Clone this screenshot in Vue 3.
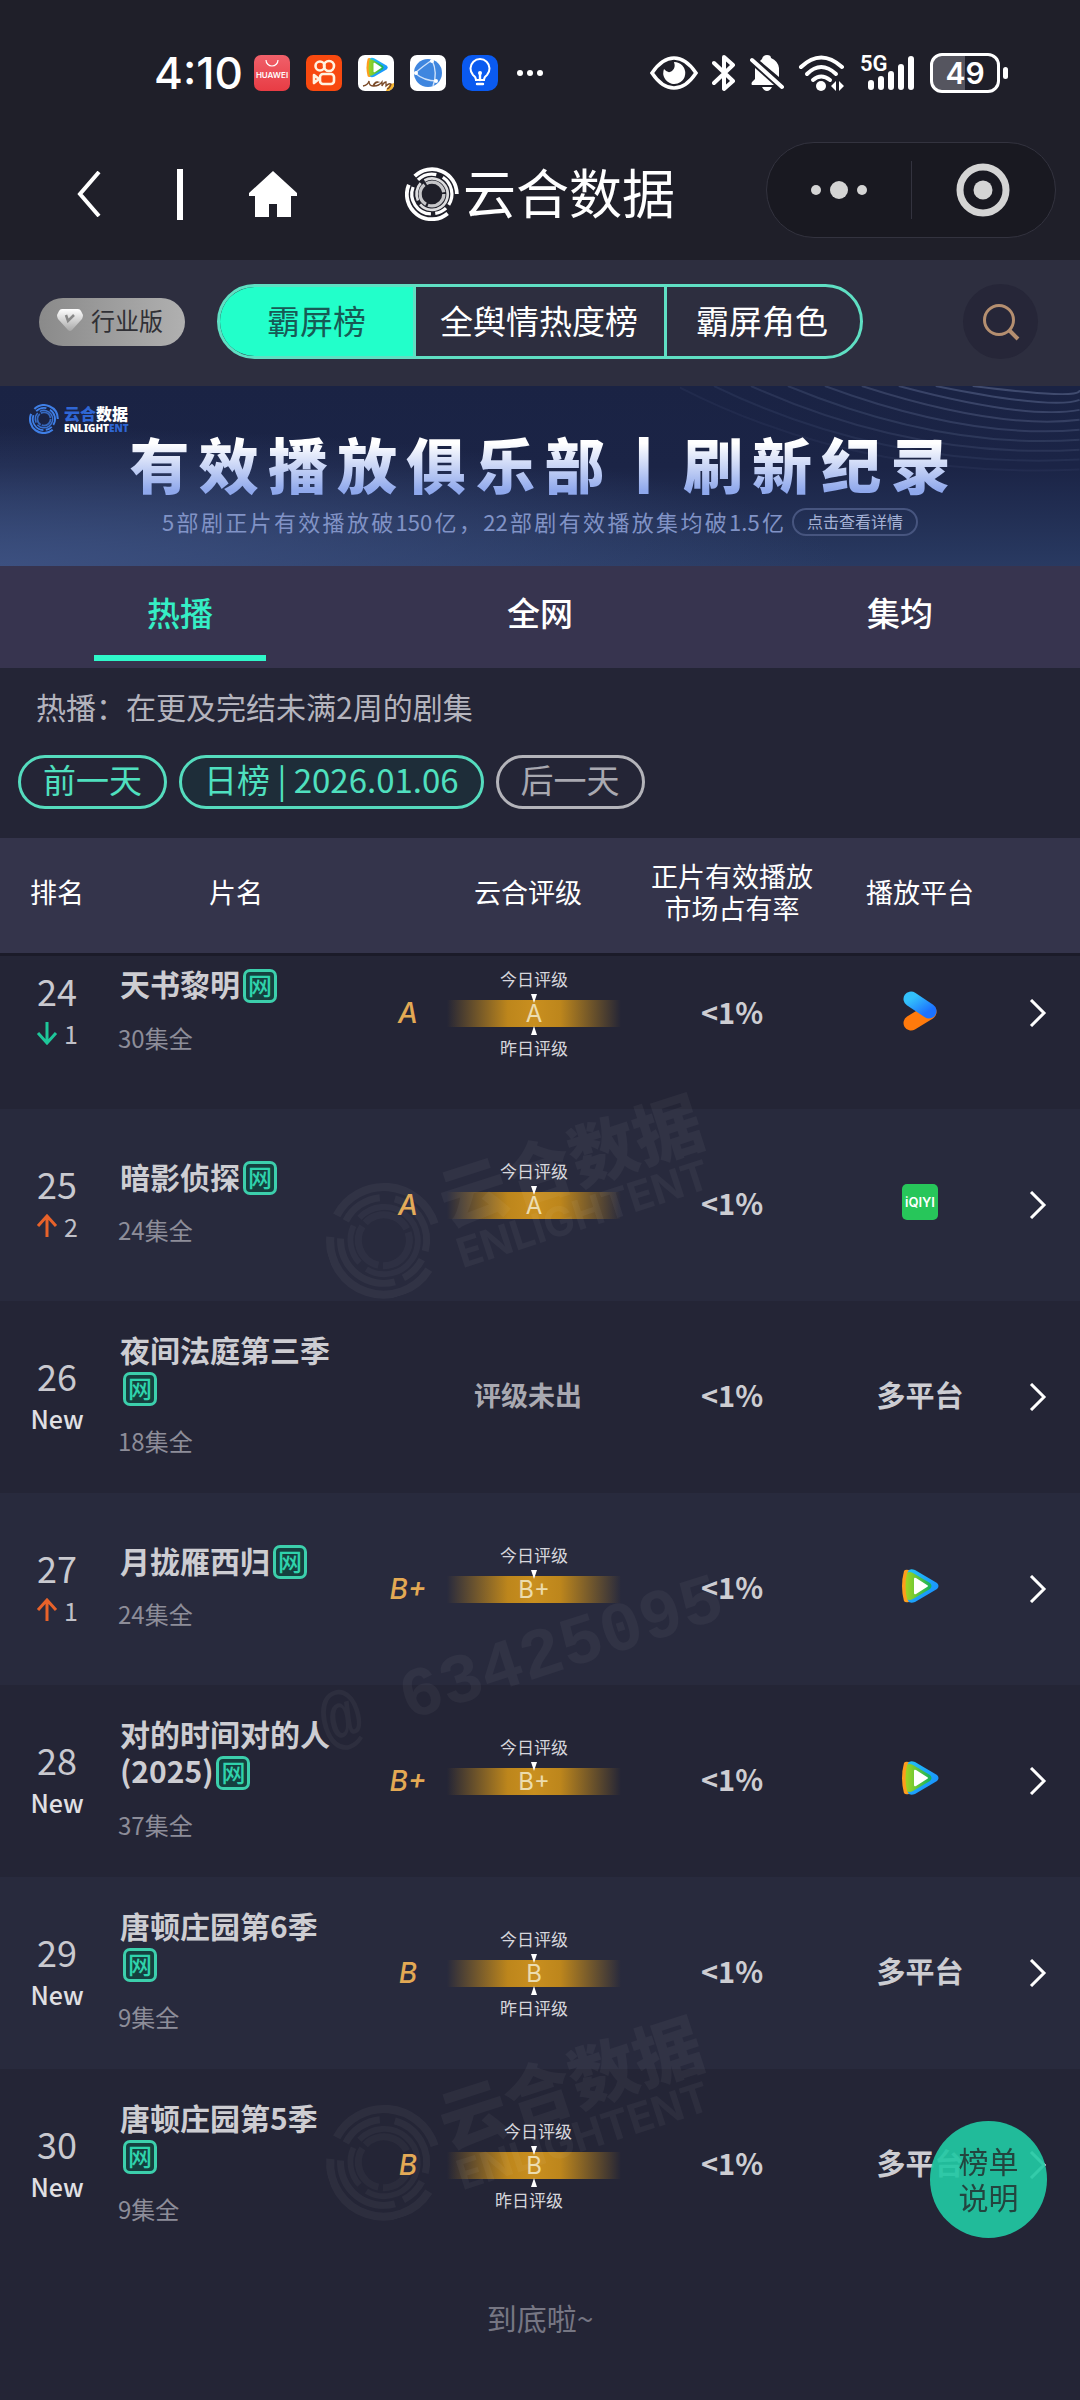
<template>
  <div class="page">
    <!-- 公用图形 -->
    <svg class="defs" aria-hidden="true">
      <symbol id="ring" viewBox="0 0 100 100">
        <g fill="none" stroke="currentColor">
          <path d="M18 17A46 46 0 0 1 96 50" stroke-width="7" />
          <path d="M7 33A46 46 0 0 0 79 86" stroke-width="7" />
          <path d="M24 24A37 37 0 0 1 58 14" stroke-width="6" />
          <path d="M70 19A37 37 0 0 1 81 70" stroke-width="6" />
          <path d="M15 37A37 37 0 0 0 48 87" stroke-width="6" />
          <path d="M56 86A37 37 0 0 0 76 76" stroke-width="6" />
          <path d="M36 25A29 29 0 1 1 28 69" stroke-width="5" opacity="0.85" />
          <path d="M29 30A29 29 0 0 0 24 62" stroke-width="5" opacity="0.85" />
          <circle cx="50" cy="50" r="22" stroke-width="6" stroke-dasharray="42 4" opacity="0.75" />
        </g>
      </symbol>
      <linearGradient id="ykBlue" x1="0" y1="0" x2="1" y2="1">
        <stop offset="0" stop-color="#33c1fb" />
        <stop offset="1" stop-color="#1c72ff" />
      </linearGradient>
      <linearGradient id="gem" x1="0" y1="0" x2="0" y2="1">
        <stop offset="0" stop-color="#ffffff" />
        <stop offset="1" stop-color="#a8a8a8" />
      </linearGradient>
      <linearGradient id="txBlue" x1="0" y1="0" x2="1" y2="1">
        <stop offset="0" stop-color="#23c3f5" />
        <stop offset="1" stop-color="#1787ff" />
      </linearGradient>
      <linearGradient id="txGreen" x1="0" y1="0" x2="1" y2="0">
        <stop offset="0" stop-color="#a4d51f" />
        <stop offset="1" stop-color="#12b25e" />
      </linearGradient>
      <symbol id="tencent" viewBox="0 0 40 36">
        <path d="M4 3Q0 18 4 33Q5 35 9 34L15 30V6L9 2Q5 1 4 3Z" fill="#ff9d1c" />
        <path d="M8 3Q5 18 8 33Q10 36 15 34L37 21Q40 18 37 15L15 2Q10 0 8 3Z" fill="url(#txBlue)" />
        <path d="M7 5Q4 18 7 31Q9 33 13 31L30 21Q33 18 30 15L13 5Q9 3 7 5Z" fill="url(#txGreen)" />
        <path d="M14 11V25Q14 27 16 26L27 19Q29 18 27 17L16 10Q14 9 14 11Z" fill="#fff" />
      </symbol>
    </svg>

    <!-- 状态栏 -->
    <div class="status">
      <span class="clock">4:10</span>
      <div class="apps">
        <span class="app huawei">
          <svg viewBox="0 0 36 14"><path d="M12 5a6 6 0 0 0 12 0" fill="none" stroke="#fff" stroke-width="1.2" /></svg>
          HUAWEI
        </span>
        <svg class="app" viewBox="0 0 36 36">
          <rect width="36" height="36" rx="7" fill="#f8490f" />
          <g fill="none" stroke="#fff3e0" stroke-width="2.6">
            <circle cx="14" cy="11" r="4.5" />
            <circle cx="23" cy="11" r="5" />
            <rect x="14" y="19" width="14" height="10" rx="3" />
            <path d="M8 20l5 4-5 4z" stroke-linejoin="round" />
          </g>
        </svg>
        <svg class="app" viewBox="0 0 36 36">
          <rect width="36" height="36" rx="7" fill="#fff" />
          <path d="M28 36Q30 29 36 28V30Q35 35 30 36Z" fill="#f7b52c" />
          <svg x="7" y="2" width="24" height="21"><use href="#tencent" /></svg>
          <path d="M5 31q5-1 6-5q0 5 4 5q2-5 5-4q-4 1-4 4q5 0 8-4v4q2-4 4-4v4q3-3 5-2q-1 4-4 5" fill="none" stroke="#7a4a28" stroke-width="1.3" />
        </svg>
        <svg class="app" viewBox="0 0 36 36">
          <rect width="36" height="36" rx="7" fill="#fff" />
          <circle cx="18" cy="18" r="14" fill="#3f86df" />
          <path d="M22 5Q28 18 23 31M22 5Q12 12 5 18Q14 26 27 26" fill="none" stroke="#cfe2fa" stroke-width="1.4" />
          <circle cx="22" cy="6" r="2" fill="#fff" />
          <circle cx="6" cy="18" r="2" fill="#fff" />
          <circle cx="26" cy="26" r="2" fill="#fff" />
        </svg>
        <svg class="app" viewBox="0 0 36 36">
          <rect width="36" height="36" rx="10" fill="#0a5af0" />
          <path d="M14 25Q14 22 11 20A9.5 9.5 0 1 1 25 20Q22 22 22 25Z" fill="none" stroke="#fff" stroke-width="2" />
          <path d="M18 19v6M15 29h6" stroke="#fff" stroke-width="2.4" stroke-linecap="round" />
          <circle cx="18" cy="18" r="2" fill="#fff" />
        </svg>
      </div>
      <svg class="dots" viewBox="0 0 28 8">
        <g fill="#fff"><circle cx="4" cy="4" r="3" /><circle cx="14" cy="4" r="3" /><circle cx="24" cy="4" r="3" /></g>
      </svg>
      <div class="signals">
        <svg width="48" height="34" viewBox="0 0 48 34">
          <path d="M2 17Q12 2 24 2T46 17Q36 32 24 32T2 17Z" fill="none" stroke="#fff" stroke-width="3.5" />
          <path d="M24 6a11 11 0 1 1-10 7q4 5 8 2t2-9z" fill="#fff" />
        </svg>
        <svg width="24" height="38" viewBox="0 0 24 38">
          <path d="M2 9L21 27L12 35V3L21 11L2 29" fill="none" stroke="#fff" stroke-width="4" stroke-linejoin="round" stroke-linecap="round" />
        </svg>
        <svg width="34" height="38" viewBox="0 0 34 38">
          <path d="M12 5Q13 1 17 1T21 4Q28 7 29 14V23L10 7ZM5 14L24 31H2Q1 30 2 28L5 25ZM12 33H22Q20 37 17 37T12 33Z" fill="#fff" />
          <path d="M2 6L32 33" stroke="#fff" stroke-width="4" stroke-linecap="round" />
        </svg>
        <svg width="48" height="38" viewBox="0 0 48 38">
          <g fill="none" stroke="#fff" stroke-width="4" stroke-linecap="round">
            <path d="M3 13Q23-6 44 13" />
            <path d="M9 20Q23 6 38 20" />
            <path d="M15 26Q23 19 32 26" />
          </g>
          <circle cx="23" cy="32" r="5" fill="#fff" />
          <path d="M33 32l5-5v10zM46 32l-5-5v10z" fill="#fff" />
        </svg>
        <span class="cell">
          <svg width="56" height="38" viewBox="0 0 56 38">
            <g stroke="#fff" stroke-width="6" stroke-linecap="round">
              <path d="M11 29v4M21 25v8M31 20v13M41 13v20M51 5v28" />
            </g>
          </svg>
          <span class="net">5G</span>
        </span>
        <span class="battery">49</span>
      </div>
    </div>

    <!-- 导航栏 -->
    <header class="nav">
      <div class="nav-left">
        <button class="icon-btn" aria-label="返回">
          <svg width="24" height="46" viewBox="0 0 24 46"><path d="M22 1L3 23L22 45" fill="none" stroke="#fff" stroke-width="4" /></svg>
        </button>
        <i class="nav-line"></i>
        <button class="icon-btn" aria-label="首页">
          <svg width="48" height="46" viewBox="0 0 48 46"><path d="M24 0L48 22V25H42V46H28V33H20V46H6V25H0V22Z" fill="#fff" /></svg>
        </button>
      </div>
      <h1 class="nav-title">
        <svg class="nav-logo"><use href="#ring" /></svg>云合数据
      </h1>
      <div class="capsule">
        <button class="icon-btn" aria-label="更多">
          <svg width="56" height="54" viewBox="0 0 56 54"><g fill="#d4d4d4"><circle cx="5" cy="27" r="5" /><circle cx="28" cy="27" r="9" /><circle cx="51" cy="27" r="5" /></g></svg>
        </button>
        <button class="icon-btn" aria-label="关闭">
          <svg width="54" height="54" viewBox="0 0 54 54"><circle cx="27" cy="27" r="23" fill="none" stroke="#d4d4d4" stroke-width="7" /><circle cx="27" cy="27" r="9.5" fill="#d4d4d4" /></svg>
        </button>
      </div>
    </header>

    <!-- 榜单切换 -->
    <div class="toolbar">
      <button class="edition">
        <svg width="26" height="22" viewBox="0 0 26 22">
          <path d="M5 0H21Q23 0 24 2L26 6Q26 8 25 10L15 21Q13 23 11 21L1 10Q0 8 0 6L2 2Q3 0 5 0Z" fill="url(#gem)" />
          <path d="M9 6l2 6 6-6" fill="none" stroke="#888" stroke-width="2.5" />
        </svg>
        行业版
      </button>
      <div class="segment">
        <button
          v-for="item in boards"
          :key="item"
          class="segment-btn"
          :class="{ active: item === activeBoard }"
          @click="activeBoard = item"
        >{{ item }}</button>
      </div>
      <button class="search" aria-label="搜索">
        <svg width="38" height="38" viewBox="0 0 38 38"><g fill="none" stroke="#b58f70" stroke-width="3"><circle cx="17" cy="17" r="14.5" /><path d="M27 27L36 36" stroke-width="4" /></g></svg>
      </button>
    </div>

    <!-- 广告横幅 -->
    <section class="banner">
      <svg class="banner-waves" viewBox="0 0 400 181" preserveAspectRatio="none">
        <g fill="none" stroke="#8fa0c8" stroke-width="2">
          <path v-for="n in 9" :key="n" :d="wave(n)" :opacity="0.36 - n * 0.033" />
        </g>
      </svg>
      <div class="brand">
        <svg class="brand-logo"><use href="#ring" /></svg>
        <div class="brand-text">
          <span class="brand-cn"><em>云合</em>数据</span>
          <span class="brand-en">ENLIGHT<em>ENT</em></span>
        </div>
      </div>
      <h2 class="banner-title">有效播放俱乐部丨刷新纪录</h2>
      <div class="banner-sub">
        <p>5部剧正片有效播放破150亿，22部剧有效播放集均破1.5亿</p>
        <a href="#detail">点击查看详情</a>
      </div>
    </section>

    <nav class="tabs">
      <button
        v-for="tab in tabs"
        :key="tab"
        class="tab"
        :class="{ active: tab === activeTab }"
        @click="activeTab = tab"
      >{{ tab }}</button>
    </nav>

    <!-- 日期筛选 -->
    <section class="filter">
      <p>热播：在更及完结未满2周的剧集</p>
      <div class="days">
        <button class="day">前一天</button>
        <button class="day current">日榜 | 2026.01.06</button>
        <button class="day off">后一天</button>
      </div>
    </section>

    <!-- 榜单 -->
    <main class="list">
      <table>
        <colgroup>
          <col class="c-rank" /><col class="c-name" /><col class="c-rate" />
          <col class="c-share" /><col class="c-plat" /><col />
        </colgroup>
        <thead>
          <tr>
            <th>排名</th>
            <th class="name">片名</th>
            <th class="rate">云合评级</th>
            <th>正片有效播放<br />市场占有率</th>
            <th>播放平台</th>
            <th></th>
          </tr>
        </thead>
        <tbody>
          <tr v-for="row in rows" :key="row.rank">
            <td class="order">
              <div class="rank">{{ row.rank }}</div>
              <div v-if="row.move" class="move">
                <svg width="22" height="24" viewBox="0 0 22 24" :class="row.move > 0 ? 'up' : 'down'">
                  <path d="M11 23V3M2 12L11 2L20 12" fill="none" stroke="currentColor" stroke-width="3" />
                </svg>
                {{ Math.abs(row.move) }}
              </div>
              <div v-else class="move fresh">New</div>
            </td>
            <td class="name">
              <div class="title">{{ row.title }}<span class="tag">网</span></div>
              <div class="eps">{{ row.eps }}集全</div>
            </td>
            <td class="rate">
              <div v-if="row.grade" class="rating">
                <em class="grade">{{ row.grade }}</em>
                <div class="scale" :class="{ shifted: row.shifted }">
                  <span class="today">今日评级</span>
                  <div class="bar" :class="{ both: row.yesterday }">{{ row.grade }}</div>
                  <span class="yesterday">{{ row.yesterday ? '昨日评级' : '' }}</span>
                </div>
              </div>
              <div v-else class="pending">评级未出</div>
            </td>
            <td class="strong">&lt;1%</td>
            <td class="strong">
              <svg v-if="row.platform === 'youku'" class="plat" width="34" height="40" viewBox="0 0 34 40">
                <path d="M8 32L26 21" stroke="#ff7a0c" stroke-width="15" stroke-linecap="round" />
                <path d="M8 8L26 20" stroke="url(#ykBlue)" stroke-width="15" stroke-linecap="round" />
              </svg>
              <span v-else-if="row.platform === 'iqiyi'" class="plat iqiyi">iQIYI</span>
              <svg v-else-if="row.platform === 'tencent'" class="plat" width="40" height="36"><use href="#tencent" /></svg>
              <template v-else>多平台</template>
            </td>
            <td>
              <button class="icon-btn go" aria-label="查看详情">
                <svg width="18" height="28" viewBox="0 0 18 28"><path d="M2 1L15 14L2 27" fill="none" stroke="#fff" stroke-width="3" /></svg>
              </button>
            </td>
          </tr>
        </tbody>
      </table>
      <p class="end">到底啦~</p>

      <!-- 水印 -->
      <div v-for="n in 2" :key="n" class="mark" :class="'mark-' + n" aria-hidden="true">
        <svg><use href="#ring" /></svg>
        <div class="mark-text"><b>云合数据</b><span>ENLIGHTENT</span></div>
      </div>
      <div class="mark mark-id" aria-hidden="true">@ 63425095</div>
    </main>

    <button class="float">榜单<br />说明</button>
  </div>
</template>

<script setup>
import { ref } from 'vue'

const boards = ['霸屏榜', '全舆情热度榜', '霸屏角色']
const activeBoard = ref('霸屏榜')

const tabs = ['热播', '全网', '集均']
const activeTab = ref('热播')

// move: 名次变化，0 为新上榜
const rows = ref([
  { rank: 24, move: -1, title: '天书黎明', eps: 30, grade: 'A', yesterday: true, platform: 'youku' },
  { rank: 25, move: 2, title: '暗影侦探', eps: 24, grade: 'A', yesterday: false, platform: 'iqiyi' },
  { rank: 26, move: 0, title: '夜间法庭第三季', eps: 18, grade: '', platform: 'multi' },
  { rank: 27, move: 1, title: '月拢雁西归', eps: 24, grade: 'B+', yesterday: false, platform: 'tencent' },
  { rank: 28, move: 0, title: '对的时间对的人(2025)', eps: 37, grade: 'B+', yesterday: false, platform: 'tencent' },
  { rank: 29, move: 0, title: '唐顿庄园第6季', eps: 9, grade: 'B', yesterday: true, platform: 'multi' },
  { rank: 30, move: 0, title: '唐顿庄园第5季', eps: 9, grade: 'B', yesterday: true, shifted: true, platform: 'multi' }
])

// 横幅右上角的弧线
const wave = (n) => `M${330 - n * 37} 0Q${430 - n * 28} ${n * 10 + 4} 400 ${n * 10 - 6}`
</script>

<style>
body {
  background: #242536;
}
</style>

<style scoped>
.page {
  position: relative;
  min-height: 100vh;
  background: #242536;
  color: #fff;
  font-family: "Noto Sans CJK SC", "Noto Sans", sans-serif;
}

.defs {
  position: absolute;
  width: 0;
  height: 0;
}

button {
  font: inherit;
  color: inherit;
  background: none;
  border: none;
  padding: 0;
  margin: 0;
  cursor: pointer;
}

h1,
h2,
p {
  margin: 0;
  font-weight: normal;
}

em {
  font-style: normal;
}

svg {
  display: block;
}

.icon-btn {
  display: flex;
  align-items: center;
  justify-content: center;
}

.status {
  display: flex;
  align-items: center;
  height: 138px;
  padding: 4px 72px 0 154px;
  background: #1f1f29;
}

.clock {
  font-family: Inter, "Noto Sans", sans-serif;
  font-size: 44px;
  font-weight: 500;
  width: 100px;
}

.apps {
  display: flex;
  gap: 16px;
}

.app {
  width: 36px;
  height: 36px;
}

.huawei {
  border-radius: 7px;
  background: linear-gradient(#f0606a, #e83c44);
  font-family: Inter, sans-serif;
  font-size: 8px;
  font-weight: 600;
  line-height: 12px;
  text-align: center;
}

.dots {
  width: 28px;
  height: 8px;
  margin-left: 18px;
}

.signals {
  display: flex;
  align-items: center;
  gap: 14px;
  margin-left: auto;
}

.cell {
  position: relative;
}

.net {
  position: absolute;
  left: 0;
  top: -2px;
  font-family: Roboto, sans-serif;
  font-size: 22px;
  font-weight: 600;
  line-height: 24px;
}

.battery {
  position: relative;
  box-sizing: border-box;
  width: 70px;
  height: 40px;
  margin-right: 8px;
  border: 3px solid #fff;
  border-radius: 12px;
  background: linear-gradient(90deg, #55555f 50%, transparent 50%);
  font-family: Inter, sans-serif;
  font-size: 30px;
  font-weight: 600;
  line-height: 34px;
  text-align: center;
}

.battery::after {
  content: '';
  position: absolute;
  right: -11px;
  top: 11px;
  width: 5px;
  height: 12px;
  border-radius: 3px;
  background: #fff;
}

.nav {
  display: grid;
  grid-template-columns: 1fr auto 1fr;
  align-items: center;
  padding-bottom: 22px;
  background: #1f1f29;
}

.nav-left {
  display: flex;
  align-items: center;
  gap: 66px;
  padding: 8px 0 0 77px;
}

.nav-line {
  width: 6px;
  height: 51px;
  margin-left: 10px;
  background: #fff;
}

.nav-title {
  display: flex;
  align-items: center;
  gap: 4px;
  padding-top: 2px;
  font-size: 53px;
  line-height: 60px;
}

.nav-logo {
  width: 54px;
  height: 54px;
  margin-top: 6px;
}

.capsule {
  justify-self: end;
  display: flex;
  width: 288px;
  height: 94px;
  margin-right: 24px;
  border: 1px solid #33333f;
  border-radius: 48px;
  background: #191921;
}

.capsule .icon-btn {
  position: relative;
  flex: 1;
}

.capsule .icon-btn + .icon-btn::before {
  content: '';
  position: absolute;
  left: 0;
  top: 18px;
  bottom: 18px;
  width: 1px;
  background: #33333f;
}

.toolbar {
  display: flex;
  align-items: center;
  height: 123px;
  padding: 0 42px 3px 39px;
  background: #2d2e3f;
}

.edition {
  display: flex;
  align-items: center;
  gap: 8px;
  height: 48px;
  padding: 0 22px 4px 18px;
  border-radius: 24px;
  background: linear-gradient(90deg, #8a8a8a, #b0b0b0);
  color: #303035;
  font-size: 24px;
}

.segment {
  display: flex;
  height: 69px;
  margin-left: 32px;
  border: 3px solid #5fdfc3;
  border-radius: 38px;
  overflow: hidden;
}

.segment-btn {
  padding: 0 26px 4px 24px;
  font-size: 33px;
}

.segment-btn + .segment-btn {
  border-left: 3px solid #5fdfc3;
}

.segment-btn:first-child {
  padding: 0 47px 4px;
}

.segment-btn:last-child {
  padding: 0 32px 4px 29px;
}

.segment-btn.active {
  background: #22ffca;
  color: #175a55;
}

.search {
  display: flex;
  align-items: center;
  justify-content: center;
  width: 75px;
  height: 75px;
  margin-left: auto;
  border-radius: 50%;
  background: #262638;
}

.banner {
  position: relative;
  padding: 18px 0 30px;
  background:
    radial-gradient(ellipse at 0% 100%, #3c5080 0%, transparent 55%),
    linear-gradient(#1a2344 0%, #1b2446 45%, #293a62 100%);
}

.banner-waves {
  position: absolute;
  top: 0;
  right: 0;
  width: 37%;
  height: 100%;
}

.brand {
  display: flex;
  align-items: center;
  gap: 5px;
  height: 30px;
  padding-left: 29px;
}

.brand-logo {
  width: 30px;
  height: 30px;
  color: #3f7fe6;
}

.brand-text {
  display: flex;
  flex-direction: column;
  font-weight: 900;
}

.brand-text em {
  color: #2f66d4;
}

.brand-cn {
  font-size: 16px;
  line-height: 18px;
}

.brand-en {
  font-family: "Noto Sans", sans-serif;
  font-size: 10px;
  line-height: 12px;
}

.banner-title {
  position: relative;
  margin: 0 12%;
  font-size: 60px;
  font-weight: 900;
  line-height: 58px;
  padding-bottom: 5px;
  text-align-last: justify;
  color: transparent;
  background: linear-gradient(#ffffff 15%, #8fa8ec 90%);
  -webkit-background-clip: text;
  background-clip: text;
}

.banner-sub {
  position: relative;
  display: flex;
  align-items: center;
  gap: 8px;
  margin: 10px 15% 0;
}

.banner-sub p {
  flex: 1;
  padding-bottom: 1px;
  font-size: 22px;
  line-height: 28px;
  white-space: nowrap;
  text-align-last: justify;
  color: #8193c6;
}

.banner-sub a {
  box-sizing: border-box;
  height: 28px;
  padding: 0 13px;
  border: 2px solid #47557f;
  border-radius: 14px;
  color: #a6b2d6;
  font-size: 16px;
  line-height: 22px;
  text-decoration: none;
}

.tabs {
  display: flex;
  background: #37344f;
}

.tab {
  position: relative;
  flex: 1;
  height: 102px;
  padding-bottom: 10px;
  font-size: 33px;
  font-weight: 500;
}

.tab.active {
  color: #35eec5;
}

.tab.active::after {
  content: '';
  position: absolute;
  left: 26%;
  right: 26%;
  bottom: 7px;
  height: 6px;
  background: #2ff7ca;
}

.filter {
  padding: 16px 18px 29px;
}

.filter p {
  padding-left: 18px;
  font-size: 30px;
  line-height: 44px;
  color: #b4b4be;
}

.days {
  display: flex;
  gap: 12px;
  margin-top: 27px;
}

.day {
  box-sizing: border-box;
  height: 54px;
  padding: 0 22px 6px;
  border: 3px solid #55dcbe;
  border-radius: 27px;
  color: #4fe0bf;
  font-size: 33px;
  line-height: 42px;
}

.day.current {
  background: #1e2d39;
}

.day.off {
  border-color: #b4b4ba;
  color: #a9a9b1;
}

.list {
  position: relative;
}

table {
  width: 100%;
  table-layout: fixed;
  border-collapse: collapse;
}

.c-rank { width: 114px; }
.c-name { width: 266px; }
.c-rate { width: 268px; }
.c-share { width: 168px; }
.c-plat { width: 208px; }

th {
  height: 107px;
  padding: 0 0 8px;
  border-bottom: 3px solid #1b1b29;
  background: #34344b;
  font-size: 27px;
  font-weight: normal;
  line-height: 32px;
}

th.name {
  padding-right: 22px;
}

th.rate {
  padding-left: 28px;
}

td {
  height: 192px;
  padding: 0;
  text-align: center;
}

tbody tr:nth-child(even) {
  background: #282a3d;
}

td.order {
  height: 188px;
  padding-bottom: 4px;
}

td.name {
  height: 188px;
  padding: 0 36px 4px 4px;
  text-align: left;
}

td.strong {
  height: 186px;
  padding-bottom: 6px;
}

/* 首行上沿滚动到表头之下 */
tbody tr:first-child td {
  height: 114px;
  padding-bottom: 39px;
}

tbody tr:first-child td.order,
tbody tr:first-child td.name,
tbody tr:first-child td.strong {
  height: 109px;
  padding-bottom: 44px;
}

.rank {
  font-size: 36px;
  line-height: 40px;
  color: #c9c9cf;
}

.move {
  display: flex;
  align-items: center;
  justify-content: center;
  gap: 6px;
  margin-top: 5px;
  font-size: 25px;
  line-height: 36px;
  color: #c0c0c8;
}

.move.fresh {
  font-weight: 500;
  color: #e0e0e4;
}

.up { color: #e8622a; }
.down { color: #1ec79a; transform: rotate(180deg); }

.title {
  padding-left: 2px;
  font-size: 30px;
  font-weight: 700;
  line-height: 37px;
  color: #cdcdd2;
}

.tag {
  display: inline-block;
  box-sizing: border-box;
  width: 34px;
  height: 34px;
  margin: 0 0 5px 3px;
  border: 3px solid #3ccfac;
  border-radius: 7px;
  background: #15403f;
  color: #2fd3ac;
  font-size: 24px;
  font-weight: 500;
  line-height: 26px;
  text-align: center;
  vertical-align: middle;
}

.eps {
  margin-top: 12px;
  font-size: 24px;
  line-height: 36px;
  color: #8d8d99;
}

.rating {
  display: flex;
  align-items: center;
  padding-right: 16px;
}

.grade {
  width: 56px;
  font-family: Inter, sans-serif;
  font-size: 28px;
  font-style: italic;
  font-weight: 500;
  color: #e3a954;
}

.scale {
  flex: 1;
  font-size: 17px;
  line-height: 24px;
  color: #d6d6dc;
}

.scale span {
  display: block;
  height: 24px;
}

.bar {
  position: relative;
  width: 174px;
  height: 27px;
  margin: 9px auto;
  background: linear-gradient(90deg, transparent, #bd861c 35%, #c98f1f 50%, #bd861c 65%, transparent);
  font-family: Inter, sans-serif;
  font-size: 24px;
  line-height: 27px;
  color: #ecdcae;
}

.bar::before,
.bar.both::after {
  content: '';
  position: absolute;
  left: 50%;
  margin-left: -3px;
  border: 3px solid transparent;
}

.bar::before {
  top: -6px;
  border-top: 9px solid #fff;
  border-bottom: none;
}

.bar.both::after {
  bottom: -8px;
  border-bottom: 9px solid #fff;
  border-top: none;
}

.shifted .today {
  padding-left: 8px;
}

.shifted .yesterday {
  padding-right: 10px;
}

.pending {
  padding: 0 0 6px 28px;
  font-size: 27px;
  font-weight: 700;
  color: #a9a9b1;
}

.strong {
  font-size: 29px;
  font-weight: 700;
  color: #cdcdd2;
}

.plat {
  margin: 0 auto;
}

.iqiyi {
  display: block;
  width: 36px;
  height: 36px;
  border-radius: 5px;
  background: #27c65a;
  color: #fff;
  font-family: Inter, sans-serif;
  font-size: 13px;
  font-weight: 600;
  line-height: 36px;
}

.go {
  width: 28px;
}

.end {
  padding: 36px 0 60px;
  font-size: 30px;
  line-height: 40px;
  text-align: center;
  color: #767683;
}

.mark {
  position: absolute;
  left: 319px;
  display: flex;
  align-items: center;
  gap: 8px;
  transform: rotate(-18deg);
  color: #fff;
  opacity: 0.04;
  pointer-events: none;
}

.mark svg {
  width: 116px;
  height: 116px;
}

.mark-1 { top: 301px; }
.mark-2 { top: 1223px; }

.mark-text {
  display: flex;
  flex-direction: column;
}

.mark b {
  font-size: 68px;
  font-weight: 900;
  line-height: 72px;
}

.mark span {
  font-family: Inter, sans-serif;
  font-size: 41px;
  font-weight: 700;
  line-height: 42px;
}

.mark-id {
  top: 786px;
  left: 312px;
  font-family: "Liberation Mono", monospace;
  font-size: 70px;
  font-weight: 700;
}

.float {
  position: fixed;
  right: 33px;
  bottom: 162px;
  width: 117px;
  height: 117px;
  padding-bottom: 4px;
  border-radius: 50%;
  background: rgba(34, 200, 163, 0.92);
  color: #23453f;
  font-size: 30px;
  line-height: 36px;
}
</style>
